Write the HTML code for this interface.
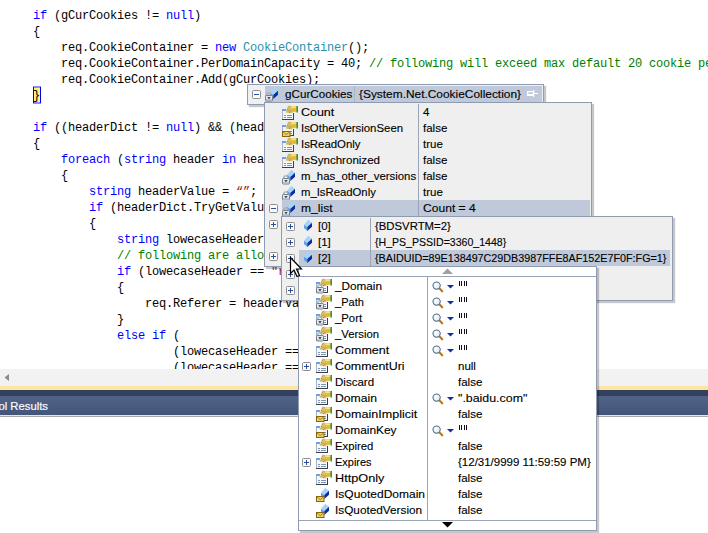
<!DOCTYPE html>
<html><head><meta charset="utf-8"><style>
html,body{margin:0;padding:0;}
body{width:708px;height:533px;position:relative;overflow:hidden;background:#fff;font-family:"Liberation Sans",sans-serif;}
#code{position:absolute;left:33px;top:8px;width:675px;height:361px;overflow:hidden;font-family:"Liberation Mono",monospace;font-size:12px;letter-spacing:-0.2px;line-height:16px;white-space:pre;color:#000;}
.cl{height:16px;}
.hl{position:relative;}

#hscroll{position:absolute;left:0;top:369px;width:708px;height:17px;background:#f2f2f2;}
#yline{position:absolute;left:0;top:386px;width:708px;height:4px;background:#fde4a0;}
#band{position:absolute;left:0;top:390px;width:708px;height:6px;background:conic-gradient(#2b3a57 25%,#384865 0 50%,#2b3a57 0 75%,#384865 0) 0 0/2px 2px;}
#title{position:absolute;left:0;top:396px;width:708px;height:19px;background:linear-gradient(#526388,#43557a);color:#fff;font-size:12px;}
#tline{position:absolute;left:0;top:415px;width:708px;height:1px;background:#e6e6e6;}
#tline2{position:absolute;left:0;top:416px;width:708px;height:1px;background:#a8a8a8;}
.tx{position:absolute;font-size:11.5px;line-height:16px;white-space:nowrap;color:#000;-webkit-text-stroke:0.12px #000;transform-origin:0 0;}
.ic{position:absolute;overflow:visible}
.shadow{position:absolute;box-shadow:2px 2px 2px rgba(0,0,0,0.25);}
</style></head><body>

<svg width="0" height="0" style="position:absolute">
<defs>
 <g id="prop">
  <rect x="2" y="5" width="12" height="11" fill="#f4f8fd"/>
  <rect x="2" y="5" width="1" height="11" fill="#a9b4c2"/>
  <rect x="2" y="15" width="12" height="1" fill="#3a3f46"/>
  <rect x="13" y="9" width="1" height="7" fill="#3a3f46"/>
  <rect x="2" y="5" width="4" height="2" fill="#6e9ee8"/>
  <rect x="4" y="11" width="2" height="1" fill="#7d95b8"/><rect x="7" y="11" width="5" height="1" fill="#7d95b8"/>
  <rect x="4" y="13" width="2" height="1" fill="#7d95b8"/><rect x="7" y="13" width="5" height="1" fill="#7d95b8"/>
  <polygon points="10,2 15.5,2 17,3.5 16.8,7.5 13,8.2 11,7" fill="#eab830"/>
  <polygon points="10.5,2.3 15.5,2.3 16.3,4 11.5,4.2" fill="#fbe28a"/>
  <polygon points="8,1.8 11,1.8 12.8,8.8 11,9.6 5.5,8.6" fill="#d8c06a"/>
  <path d="M7,6 l1,-1 M8,7.5 l2,-2 M9,9 l2.5,-2.5 M8.5,3.5 l1,-1" stroke="#8a7a40" stroke-width="0.6"/>
  <rect x="16.4" y="2" width="1.6" height="6.5" fill="#2f9a3d"/>
 </g>
 <g id="field">
  <polygon points="7,7.8 11.3,2.8 15,5.8 10.3,10" fill="#a6d3f8"/>
  <polygon points="7,7.8 10.3,10 10.3,14 7,10.9" fill="#5b9fe8"/>
  <polygon points="10.3,10 15,5.8 15,9.8 10.3,14" fill="#0a2ea2"/>
 </g>
 <g id="lock">
  <path d="M3.8,10.8 V9.6 A2,1.8 0 0 1 7.8,9.6 V10.8" fill="none" stroke="#a3abb4" stroke-width="1.3"/>
  <rect x="2.5" y="10.5" width="7" height="5.5" rx="0.8" fill="#e4e8ed" stroke="#737e8c"/>
  <rect x="3" y="14.2" width="6" height="1.5" fill="#b0b9c6"/>
  <polygon points="4.3,12.2 7.7,12.2 6,14" fill="#111"/>
 </g>
 <g id="env">
  <rect x="2.5" y="11.5" width="7.5" height="5" fill="#efd064" stroke="#86660f"/>
  <polyline points="3.2,12.3 6.25,14.6 9.3,12.3" fill="none" stroke="#9a7a20" stroke-width="0.9"/>
 </g>
 <g id="plus">
  <rect x="0.5" y="0.5" width="8" height="8" rx="1" fill="#fafafa" stroke="#8e8e8e"/>
  <rect x="2" y="4" width="5" height="1" fill="#2c4e9c"/><rect x="4" y="2" width="1" height="5" fill="#2c4e9c"/>
 </g>
 <g id="minus">
  <rect x="0.5" y="0.5" width="8" height="8" rx="1" fill="#fafafa" stroke="#8e8e8e"/>
  <rect x="2" y="4" width="5" height="1" fill="#2c4e9c"/>
 </g>
 <g id="mag">
  <line x1="7.3" y1="7.3" x2="10.2" y2="10.2" stroke="#b07e22" stroke-width="2.3" stroke-linecap="round"/>
  <circle cx="4.6" cy="4.6" r="3.6" fill="#eaf3fb" stroke="#566c86" stroke-width="1.1"/>
  <circle cx="3.8" cy="3.8" r="1.3" fill="#fff"/>
 </g>
 <g id="qq">
  <rect x="1" y="0" width="1" height="5" fill="#1a0a20"/><rect x="3" y="0" width="1" height="5" fill="#1a0a20"/>
  <rect x="6" y="0" width="1" height="5" fill="#1a0a20"/><rect x="8" y="0" width="1" height="5" fill="#1a0a20"/>
 </g>
</defs>
</svg>
<div style="position:absolute;left:33px;top:86px;width:8px;height:18px;background:#8c8cf8"></div><div style="position:absolute;left:33px;top:87px;width:6px;height:16px;border-left:1px solid #00f;border-right:1px solid #00f"></div><div style="position:absolute;left:34px;top:88px;width:6px;height:14px;background:#fff080"></div><div id="code"><div class="cl"><span style="color:#0000ff">if</span> (gCurCookies != <span style="color:#0000ff">null</span>)</div><div class="cl">{</div><div class="cl">    req.CookieContainer = <span style="color:#0000ff">new</span> <span style="color:#2b91af">CookieContainer</span>();</div><div class="cl">    req.CookieContainer.PerDomainCapacity = 40; <span style="color:#008000">// following will exceed max default 20 cookie per domain</span></div><div class="cl">    req.CookieContainer.Add(gCurCookies);</div><div class="cl">}</div><div class="cl"></div><div class="cl"><span style="color:#0000ff">if</span> ((headerDict != <span style="color:#0000ff">null</span>) &amp;&amp; (headerDict.Count &gt; 0))</div><div class="cl">{</div><div class="cl">    <span style="color:#0000ff">foreach</span> (<span style="color:#0000ff">string</span> header <span style="color:#0000ff">in</span> headerDict.Keys)</div><div class="cl">    {</div><div class="cl">        <span style="color:#0000ff">string</span> headerValue = <span style="color:#a31515">“”</span>;</div><div class="cl">        <span style="color:#0000ff">if</span> (headerDict.TryGetValue(header, <span style="color:#0000ff">out</span> headerValue))</div><div class="cl">        {</div><div class="cl">            <span style="color:#0000ff">string</span> lowecaseHeader = header.ToLower();</div><div class="cl">            <span style="color:#008000">// following are allowed to set in request header</span></div><div class="cl">            <span style="color:#0000ff">if</span> (lowecaseHeader == <span style="color:#a31515">&quot;referer&quot;</span>)</div><div class="cl">            {</div><div class="cl">                req.Referer = headerValue;</div><div class="cl">            }</div><div class="cl">            <span style="color:#0000ff">else</span> <span style="color:#0000ff">if</span> (</div><div class="cl">                    (lowecaseHeader == <span style="color:#a31515">&quot;accept&quot;</span>) ||</div><div class="cl">                    (lowecaseHeader == <span style="color:#a31515">&quot;connection&quot;</span>) ||</div></div>
<div id="hscroll"><svg style="position:absolute;left:4px;top:5px" width="6" height="8"><polygon points="5,0 5,7 0.5,3.5" fill="#8a8a8a"/></svg></div>
<div id="yline"></div>
<div id="band"></div>
<div id="title"><span style="position:absolute;left:-30.5px;top:3.5px;font-size:11.3px;-webkit-text-stroke:0.15px #fff">Symbol Results</span></div>
<div id="tline"></div><div id="tline2"></div>
<div id="p1h" style="position:absolute;left:247px;top:84px;width:295px;height:19px;border:1px solid #8f9bb0;box-shadow:2px 2px 1px rgba(0,0,0,0.22);background:#eef0f3"></div>
<div style="position:absolute;left:265px;top:86px;width:277px;height:16px;background:#bfc9d9"></div>
<div style="position:absolute;left:354px;top:86px;width:1px;height:16px;background:#aeb6c3"></div>
<svg class="ic" style="left:252px;top:90px" width="9" height="9"><use href="#minus"/></svg>
<svg class="ic" style="left:263px;top:85px" width="16" height="16"><use href="#field"/></svg>
<svg class="ic" style="left:263px;top:85px" width="16" height="16"><use href="#lock"/></svg>
<div class="tx" style="left:285px;top:86px;transform:scaleX(1.0141);">gCurCookies</div>
<div class="tx" style="left:359px;top:86px;transform:scaleX(1.0346);">{System.Net.CookieCollection}</div>
<svg class="ic" style="left:526px;top:89px" width="13" height="10"><rect x="1" y="2" width="6.5" height="5" fill="#fff"/><rect x="2.3" y="3.2" width="4.4" height="1.8" fill="#bfc9d9"/><rect x="7" y="1" width="1.3" height="7" fill="#fff"/><rect x="8" y="4" width="4" height="1" fill="#fff"/></svg>
<div style="position:absolute;left:264px;top:102px;width:326px;height:163px;border:1px solid #8f9bb0;box-shadow:2px 2px 1px rgba(0,0,0,0.22);background:#efefef"></div>
<div style="position:absolute;left:418px;top:104px;width:1px;height:112px;background:#9aa4b4"></div>
<svg class="ic" style="left:280px;top:104px" width="16" height="16"><use href="#prop"/></svg>
<div class="tx" style="left:301px;top:104px;transform:scaleX(1.0836);">Count</div>
<div class="tx" style="left:423px;top:104px;">4</div>
<svg class="ic" style="left:280px;top:120px" width="16" height="16"><use href="#prop"/></svg>
<svg class="ic" style="left:280px;top:120px" width="16" height="16"><use href="#env"/></svg>
<div class="tx" style="left:301px;top:120px;transform:scaleX(0.9920);">IsOtherVersionSeen</div>
<div class="tx" style="left:423px;top:120px;">false</div>
<svg class="ic" style="left:280px;top:136px" width="16" height="16"><use href="#prop"/></svg>
<div class="tx" style="left:301px;top:136px;transform:scaleX(0.9902);">IsReadOnly</div>
<div class="tx" style="left:423px;top:136px;">true</div>
<svg class="ic" style="left:280px;top:152px" width="16" height="16"><use href="#prop"/></svg>
<div class="tx" style="left:301px;top:152px;transform:scaleX(1.0048);">IsSynchronized</div>
<div class="tx" style="left:423px;top:152px;">false</div>
<svg class="ic" style="left:280px;top:167px" width="16" height="16"><use href="#field"/></svg>
<svg class="ic" style="left:280px;top:168px" width="16" height="16"><use href="#lock"/></svg>
<div class="tx" style="left:301px;top:168px;transform:scaleX(0.9893);">m_has_other_versions</div>
<div class="tx" style="left:423px;top:168px;">false</div>
<svg class="ic" style="left:280px;top:183px" width="16" height="16"><use href="#field"/></svg>
<svg class="ic" style="left:280px;top:184px" width="16" height="16"><use href="#lock"/></svg>
<div class="tx" style="left:301px;top:184px;transform:scaleX(0.9834);">m_IsReadOnly</div>
<div class="tx" style="left:423px;top:184px;">true</div>
<div style="position:absolute;left:282px;top:200px;width:308px;height:16px;background:#bfc9d9"></div>
<div style="position:absolute;left:418px;top:200px;width:1px;height:16px;background:#9aa4b4"></div>
<svg class="ic" style="left:269px;top:204px" width="9" height="9"><use href="#minus"/></svg>
<svg class="ic" style="left:280px;top:199px" width="16" height="16"><use href="#field"/></svg>
<svg class="ic" style="left:280px;top:200px" width="16" height="16"><use href="#lock"/></svg>
<div class="tx" style="left:301px;top:200px;transform:scaleX(1.0500);">m_list</div>
<div class="tx" style="left:423px;top:200px;transform:scaleX(1.0507);">Count = 4</div>
<svg class="ic" style="left:269px;top:220px" width="9" height="9"><use href="#plus"/></svg>
<svg class="ic" style="left:269px;top:252px" width="9" height="9"><use href="#plus"/></svg>
<div style="position:absolute;left:281px;top:216px;width:390px;height:83px;border:1px solid #8f9bb0;box-shadow:2px 2px 1px rgba(0,0,0,0.22);background:#efefef"></div>
<div style="position:absolute;left:370px;top:218px;width:1px;height:79px;background:#9aa4b4"></div>
<svg class="ic" style="left:286px;top:222px" width="9" height="9"><use href="#plus"/></svg>
<svg class="ic" style="left:297px;top:217px" width="16" height="16"><use href="#field"/></svg>
<div class="tx" style="left:318px;top:218px;">[0]</div>
<div class="tx" style="left:375px;top:218px;transform:scaleX(0.9868);">{BDSVRTM=2}</div>
<svg class="ic" style="left:286px;top:238px" width="9" height="9"><use href="#plus"/></svg>
<svg class="ic" style="left:297px;top:233px" width="16" height="16"><use href="#field"/></svg>
<div class="tx" style="left:318px;top:234px;">[1]</div>
<div class="tx" style="left:375px;top:234px;transform:scaleX(0.9178);">{H_PS_PSSID=3360_1448}</div>
<div style="position:absolute;left:299px;top:250px;width:371px;height:16px;background:#bfc9d9"></div>
<div style="position:absolute;left:370px;top:250px;width:1px;height:16px;background:#9aa4b4"></div>
<svg class="ic" style="left:286px;top:254px" width="9" height="9"><use href="#plus"/></svg>
<svg class="ic" style="left:297px;top:249px" width="16" height="16"><use href="#field"/></svg>
<div class="tx" style="left:318px;top:250px;">[2]</div>
<div class="tx" style="left:375px;top:250px;transform:scaleX(0.9359);">{BAIDUID=89E138497C29DB3987FFE8AF152E7F0F:FG=1}</div>
<svg class="ic" style="left:286px;top:270px" width="9" height="9"><use href="#plus"/></svg>
<svg class="ic" style="left:297px;top:265px" width="16" height="16"><use href="#field"/></svg>
<div class="tx" style="left:318px;top:266px;">[3]</div>
<div class="tx" style="left:375px;top:266px;">{BIDUPSID=...}</div>
<svg class="ic" style="left:286px;top:286px" width="9" height="9"><use href="#plus"/></svg>
<svg class="ic" style="left:297px;top:281px" width="16" height="16"><use href="#field"/></svg>
<div class="tx" style="left:318px;top:282px;">Raw View</div>
<div class="tx" style="left:375px;top:282px;"></div>
<div style="position:absolute;left:298px;top:266px;width:297px;height:263px;border:1px solid #8f9bb0;box-shadow:2px 2px 1px rgba(0,0,0,0.22);background:#fff"></div>
<div style="position:absolute;left:299px;top:276px;width:297px;height:1px;background:#9aa4b4"></div>
<div style="position:absolute;left:299px;top:520px;width:297px;height:1px;background:#9aa4b4"></div>
<div style="position:absolute;left:427px;top:277px;width:1px;height:243px;background:#9aa4b4"></div>
<svg class="ic" style="left:442px;top:268px" width="11" height="6"><polygon points="0,6 5.5,0.5 11,6" fill="#a0a0a0"/></svg>
<svg class="ic" style="left:442px;top:522px" width="11" height="6"><polygon points="0,0 11,0 5.5,5.5" fill="#000"/></svg>
<svg class="ic" style="left:314px;top:277px" width="16" height="16"><use href="#prop"/></svg>
<svg class="ic" style="left:314px;top:277px" width="16" height="16"><use href="#lock"/></svg>
<div class="tx" style="left:335px;top:278px;transform:scaleX(1.0216);">_Domain</div>
<svg class="ic" style="left:432px;top:281px" width="11" height="11"><use href="#mag"/></svg>
<svg class="ic" style="left:447px;top:285px" width="7" height="4"><polygon points="0,0 7,0 3.5,3.5" fill="#1a2a9a"/></svg>
<svg class="ic" style="left:458px;top:281px" width="10" height="5"><use href="#qq"/></svg>
<svg class="ic" style="left:314px;top:293px" width="16" height="16"><use href="#prop"/></svg>
<svg class="ic" style="left:314px;top:293px" width="16" height="16"><use href="#lock"/></svg>
<div class="tx" style="left:335px;top:294px;transform:scaleX(0.9609);">_Path</div>
<svg class="ic" style="left:432px;top:297px" width="11" height="11"><use href="#mag"/></svg>
<svg class="ic" style="left:447px;top:301px" width="7" height="4"><polygon points="0,0 7,0 3.5,3.5" fill="#1a2a9a"/></svg>
<svg class="ic" style="left:458px;top:297px" width="10" height="5"><use href="#qq"/></svg>
<svg class="ic" style="left:314px;top:309px" width="16" height="16"><use href="#prop"/></svg>
<svg class="ic" style="left:314px;top:309px" width="16" height="16"><use href="#lock"/></svg>
<div class="tx" style="left:335px;top:310px;transform:scaleX(0.9856);">_Port</div>
<svg class="ic" style="left:432px;top:313px" width="11" height="11"><use href="#mag"/></svg>
<svg class="ic" style="left:447px;top:317px" width="7" height="4"><polygon points="0,0 7,0 3.5,3.5" fill="#1a2a9a"/></svg>
<svg class="ic" style="left:458px;top:313px" width="10" height="5"><use href="#qq"/></svg>
<svg class="ic" style="left:314px;top:325px" width="16" height="16"><use href="#prop"/></svg>
<svg class="ic" style="left:314px;top:325px" width="16" height="16"><use href="#lock"/></svg>
<div class="tx" style="left:335px;top:326px;transform:scaleX(0.9830);">_Version</div>
<svg class="ic" style="left:432px;top:329px" width="11" height="11"><use href="#mag"/></svg>
<svg class="ic" style="left:447px;top:333px" width="7" height="4"><polygon points="0,0 7,0 3.5,3.5" fill="#1a2a9a"/></svg>
<svg class="ic" style="left:458px;top:329px" width="10" height="5"><use href="#qq"/></svg>
<svg class="ic" style="left:314px;top:341px" width="16" height="16"><use href="#prop"/></svg>
<div class="tx" style="left:335px;top:342px;transform:scaleX(1.0884);">Comment</div>
<svg class="ic" style="left:432px;top:345px" width="11" height="11"><use href="#mag"/></svg>
<svg class="ic" style="left:447px;top:349px" width="7" height="4"><polygon points="0,0 7,0 3.5,3.5" fill="#1a2a9a"/></svg>
<svg class="ic" style="left:458px;top:345px" width="10" height="5"><use href="#qq"/></svg>
<svg class="ic" style="left:302px;top:362px" width="9" height="9"><use href="#plus"/></svg>
<svg class="ic" style="left:314px;top:357px" width="16" height="16"><use href="#prop"/></svg>
<div class="tx" style="left:335px;top:358px;transform:scaleX(1.0777);">CommentUri</div>
<div class="tx" style="left:458px;top:358px;">null</div>
<svg class="ic" style="left:314px;top:373px" width="16" height="16"><use href="#prop"/></svg>
<div class="tx" style="left:335px;top:374px;transform:scaleX(1.0031);">Discard</div>
<div class="tx" style="left:458px;top:374px;">false</div>
<svg class="ic" style="left:314px;top:389px" width="16" height="16"><use href="#prop"/></svg>
<div class="tx" style="left:335px;top:390px;transform:scaleX(1.0583);">Domain</div>
<svg class="ic" style="left:432px;top:393px" width="11" height="11"><use href="#mag"/></svg>
<svg class="ic" style="left:447px;top:397px" width="7" height="4"><polygon points="0,0 7,0 3.5,3.5" fill="#1a2a9a"/></svg>
<div class="tx" style="left:458px;top:390px;transform:scaleX(1.0765);">&quot;.baidu.com&quot;</div>
<svg class="ic" style="left:314px;top:405px" width="16" height="16"><use href="#prop"/></svg>
<svg class="ic" style="left:314px;top:405px" width="16" height="16"><use href="#env"/></svg>
<div class="tx" style="left:335px;top:406px;transform:scaleX(1.0908);">DomainImplicit</div>
<div class="tx" style="left:458px;top:406px;">false</div>
<svg class="ic" style="left:314px;top:421px" width="16" height="16"><use href="#prop"/></svg>
<svg class="ic" style="left:314px;top:421px" width="16" height="16"><use href="#env"/></svg>
<div class="tx" style="left:335px;top:422px;transform:scaleX(1.0350);">DomainKey</div>
<svg class="ic" style="left:432px;top:425px" width="11" height="11"><use href="#mag"/></svg>
<svg class="ic" style="left:447px;top:429px" width="7" height="4"><polygon points="0,0 7,0 3.5,3.5" fill="#1a2a9a"/></svg>
<svg class="ic" style="left:458px;top:425px" width="10" height="5"><use href="#qq"/></svg>
<svg class="ic" style="left:314px;top:437px" width="16" height="16"><use href="#prop"/></svg>
<div class="tx" style="left:335px;top:438px;transform:scaleX(0.9820);">Expired</div>
<div class="tx" style="left:458px;top:438px;">false</div>
<svg class="ic" style="left:302px;top:458px" width="9" height="9"><use href="#plus"/></svg>
<svg class="ic" style="left:314px;top:453px" width="16" height="16"><use href="#prop"/></svg>
<div class="tx" style="left:335px;top:454px;transform:scaleX(0.9538);">Expires</div>
<div class="tx" style="left:458px;top:454px;">{12/31/9999 11:59:59 PM}</div>
<svg class="ic" style="left:314px;top:469px" width="16" height="16"><use href="#prop"/></svg>
<div class="tx" style="left:335px;top:470px;transform:scaleX(1.1034);">HttpOnly</div>
<div class="tx" style="left:458px;top:470px;">false</div>
<svg class="ic" style="left:314px;top:485px" width="16" height="16"><use href="#field"/></svg>
<svg class="ic" style="left:314px;top:485px" width="16" height="16"><use href="#env"/></svg>
<div class="tx" style="left:335px;top:486px;transform:scaleX(1.0433);">IsQuotedDomain</div>
<div class="tx" style="left:458px;top:486px;">false</div>
<svg class="ic" style="left:314px;top:501px" width="16" height="16"><use href="#field"/></svg>
<svg class="ic" style="left:314px;top:501px" width="16" height="16"><use href="#env"/></svg>
<div class="tx" style="left:335px;top:502px;transform:scaleX(1.0246);">IsQuotedVersion</div>
<div class="tx" style="left:458px;top:502px;">false</div>
<svg class="ic" style="left:289px;top:256px" width="14" height="22"><polygon points="1.5,1.5 1.5,17.5 5,14 8,20.5 10.5,19.5 7.5,13 12.5,13" fill="#fff" stroke="#000" stroke-width="1.2" stroke-linejoin="miter"/></svg>
</body></html>
